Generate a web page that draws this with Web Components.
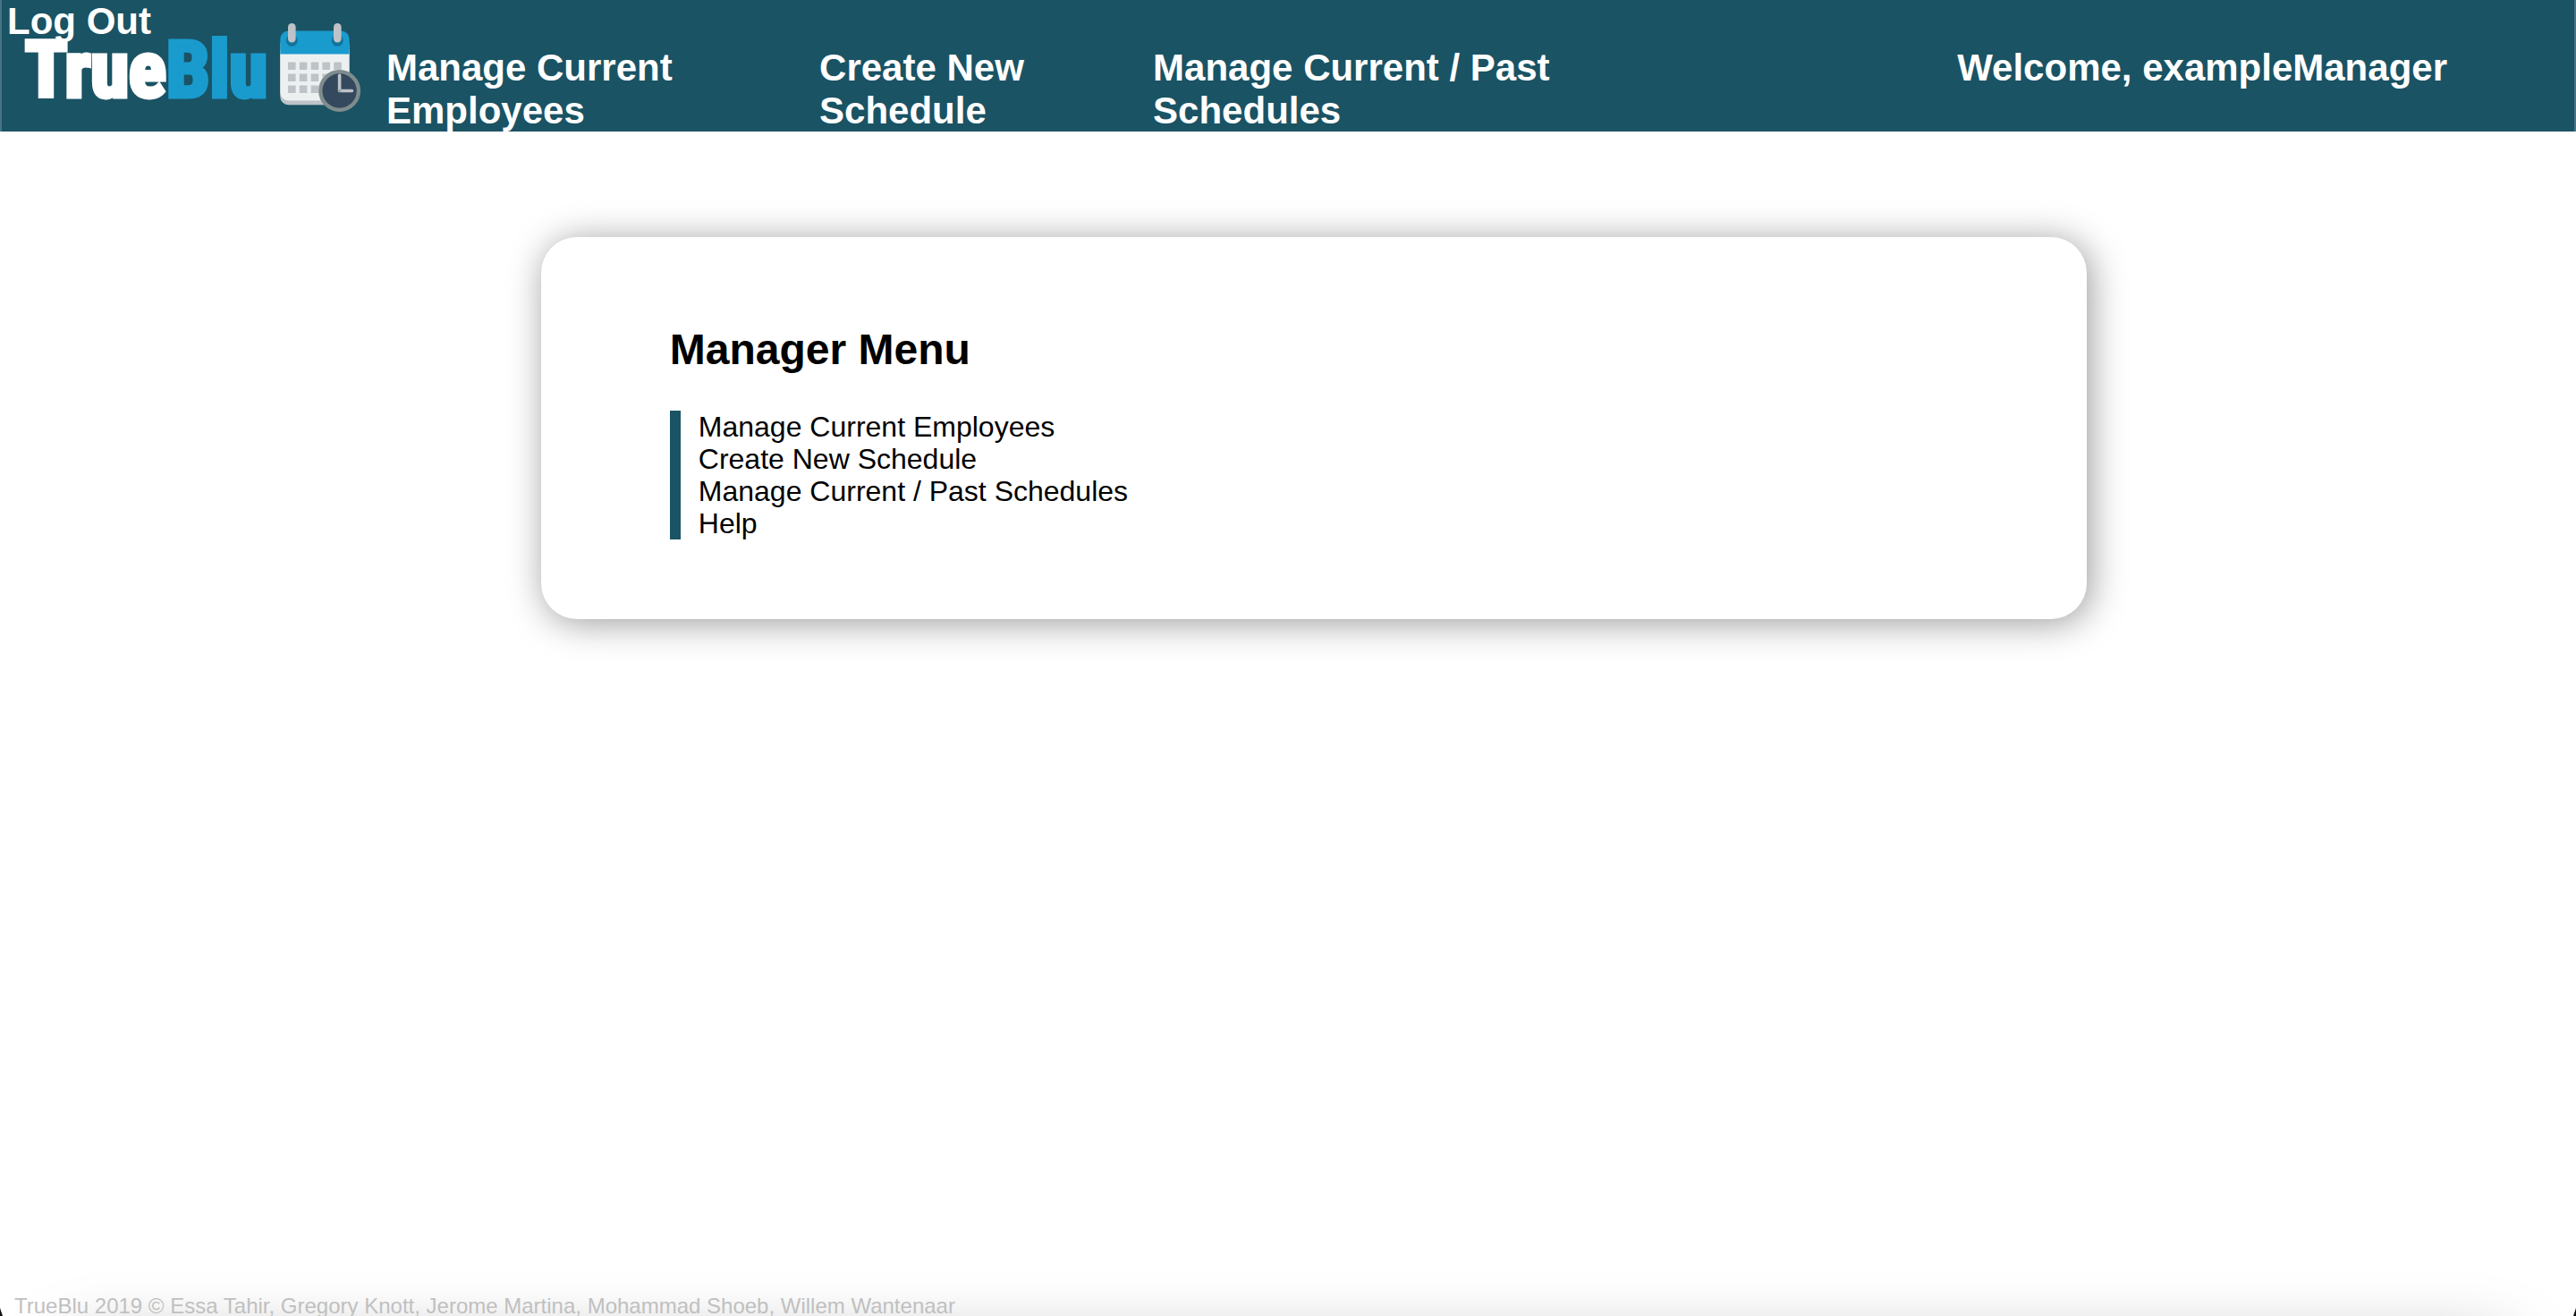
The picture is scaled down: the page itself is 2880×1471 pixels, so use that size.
<!DOCTYPE html>
<html lang="en">
<head>
<meta charset="utf-8">
<title>TrueBlu - Manager Menu</title>
<style>
  html, body { margin: 0; }
  body {
    --brand: #1a5364;
    --accent: #1a9bce;
    font-family: "Liberation Sans", Arial, sans-serif;
    background: #fff;
    color: #000;
  }
</style>
</head>
<body>
<tb-page>
  <tb-header slot="header">
    <tb-logo slot="logo"></tb-logo>
    <tb-nav-item slot="nav" href="#employees">Manage Current Employees</tb-nav-item>
    <tb-nav-item slot="nav" href="#create">Create New Schedule</tb-nav-item>
    <tb-nav-item slot="nav" href="#schedules">Manage Current / Past Schedules</tb-nav-item>
    <span slot="user">Welcome, exampleManager</span>
  </tb-header>
  <tb-card>
    <span slot="title">Manager Menu</span>
    <tb-menu-link href="#employees">Manage Current Employees</tb-menu-link>
    <tb-menu-link href="#create">Create New Schedule</tb-menu-link>
    <tb-menu-link href="#schedules">Manage Current / Past Schedules</tb-menu-link>
    <tb-menu-link href="#help">Help</tb-menu-link>
  </tb-card>
  <tb-footer slot="footer">TrueBlu 2019 © Essa Tahir, Gregory Knott, Jerome Martina, Mohammad Shoeb, Willem Wantenaar</tb-footer>
</tb-page>

<script>
  class Base extends HTMLElement {
    constructor() {
      super();
      this.attachShadow({ mode: "open" }).innerHTML = this.constructor.markup;
    }
  }

  class LinkBase extends Base {
    connectedCallback() {
      this.shadowRoot.querySelector("a").href = this.getAttribute("href") || "#";
    }
  }

  customElements.define("tb-page", class extends Base {
    static markup = `
      <style>
        :host { display: flex; flex-direction: column; min-height: 100vh; }
        main { flex: 1; padding: 118px 19% 0 21%; }
      </style>
      <slot name="header"></slot>
      <main><slot></slot></main>
      <slot name="footer"></slot>`;
  });

  customElements.define("tb-header", class extends Base {
    static markup = `
      <style>
        :host { display: block; position: relative; background: var(--brand); color: #fff;
          font-size: 42px; font-weight: bold; line-height: 48px;
          border: solid rgba(255, 255, 255, .2); border-width: 0 2px; box-sizing: border-box; }
        header { display: flex; align-items: flex-start; padding-right: 142px; }
        .logo { flex: 0 0 430px; box-sizing: border-box; padding: 25px 0 0 26px; }
        nav { flex: 1; display: grid; grid-template-columns: 484fr 373fr 899fr; padding-top: 52px; margin-bottom: -1px; }
        .user { padding-top: 52px; margin-bottom: -1px; white-space: nowrap; }
        .logout { position: absolute; left: 6px; top: 0; color: inherit; text-decoration: none; }
      </style>
      <header>
        <div class="logo"><slot name="logo"></slot></div>
        <nav><slot name="nav"></slot></nav>
        <div class="user"><slot name="user"></slot></div>
      </header>
      <a class="logout" href="#logout">Log Out</a>`;
  });

  customElements.define("tb-nav-item", class extends LinkBase {
    static markup = `
      <style>
        :host { display: block; max-width: 484px; }
        a { display: block; padding-right: 24px; color: inherit; text-decoration: none; }
      </style>
      <a><slot></slot></a>`;
  });

  customElements.define("tb-logo", class extends Base {
    static markup = `
      <style>
        :host { display: flex; align-items: flex-start; justify-content: space-between; padding-right: 28px; }
        .word { width: 284px; font: bold 87px/106px "Roboto Condensed", "Open Sans Condensed", "Noto Sans Condensed", "DejaVu Sans Condensed", sans-serif;
          color: #fff; -webkit-text-stroke: 5px currentColor; }
        .blu { color: var(--accent); }
        svg { display: block; width: 91px; height: 101px; flex: none; }
      </style>
      <div class="word">True<span class="blu">Blu</span></div>
      <svg viewBox="313 24.500 91 101" aria-hidden="true">
        <rect x="313.300" y="40" width="77.200" height="76.700" rx="9" fill="#bdc3c7"/>
        <path d="M313.300 55H390.500V103a9 9 0 0 1-9 9H322.300a9 9 0 0 1-9-9Z" fill="#ecf0f1"/>
        <path d="M313.300 60V43a9 9 0 0 1 9-9H381.500a9 9 0 0 1 9 9V60Z" fill="#1a9bce"/>
        <g fill="#12749b"><circle cx="326.300" cy="44.800" r="6.500"/><circle cx="377.300" cy="44.800" r="6.500"/></g>
        <g fill="#bdc3c7">
          <rect x="322" y="25.500" width="8.600" height="21.500" rx="4.300"/>
          <rect x="373" y="25.500" width="8.600" height="21.500" rx="4.300"/>
          <path d="M322 69h8.600v8.600h-8.600zM334.800 69h8.600v8.600h-8.600zM347.600 69h8.600v8.600h-8.600zM360.400 69h8.600v8.600h-8.600zM373.200 69h8.600v8.600h-8.600zM322 82h8.600v8.600h-8.600zM334.800 82h8.600v8.600h-8.600zM347.600 82h8.600v8.600h-8.600zM360.400 82h8.600v8.600h-8.600zM322 95h8.600v8.600h-8.600zM334.800 95h8.600v8.600h-8.600zM347.600 95h8.600v8.600h-8.600z"/>
        </g>
        <circle cx="379.600" cy="101" r="21.300" fill="#34495e" stroke="#7f8c8d" stroke-width="4.300"/>
        <path d="M379.600 83.700V101H393.500" fill="none" stroke="#bdc3c7" stroke-width="3.600" stroke-linecap="round" stroke-linejoin="round"/>
        <circle cx="379.600" cy="101" r="1.800" fill="#95a5a6"/>
      </svg>`;
  });

  customElements.define("tb-card", class extends Base {
    static markup = `
      <style>
        :host { display: block; background: #fff; border-radius: 40px; padding: 98px 144px 89px;
          box-shadow: 4px 4px 40px rgba(0, 0, 0, .4); }
        h1 { margin: 0 0 40px; font-size: 48px; line-height: 56px; }
        nav { border-left: 12px solid var(--brand); padding-left: 20px; font-size: 32px; line-height: 36px; }
      </style>
      <h1><slot name="title"></slot></h1>
      <nav><slot></slot></nav>`;
  });

  customElements.define("tb-menu-link", class extends LinkBase {
    static markup = `
      <style>
        :host { display: block; }
        a { color: inherit; text-decoration: none; }
      </style>
      <a><slot></slot></a>`;
  });

  customElements.define("tb-footer", class extends Base {
    static markup = `
      <style>
        :host { display: block; position: relative; overflow: hidden; padding: 80px 16px 0;
          font-size: 24px; line-height: 22px; color: #c0c0c0; }
        .glow { position: absolute; left: 80px; right: 80px; top: calc(100% + 38px); height: 200px;
          box-shadow: 0 0 80px rgba(0, 0, 0, .4); }
        .corner { position: absolute; bottom: 0; width: 3px; height: 9px; background: #111; }
        .left { left: 0; clip-path: polygon(0 0, 100% 100%, 0 100%); }
        .right { right: 0; clip-path: polygon(100% 0, 100% 100%, 0 100%); }
        footer { position: relative; }
      </style>
      <div class="glow"></div>
      <footer><slot></slot></footer>
      <i class="corner left"></i><i class="corner right"></i>`;
  });
</script>
</body>
</html>
